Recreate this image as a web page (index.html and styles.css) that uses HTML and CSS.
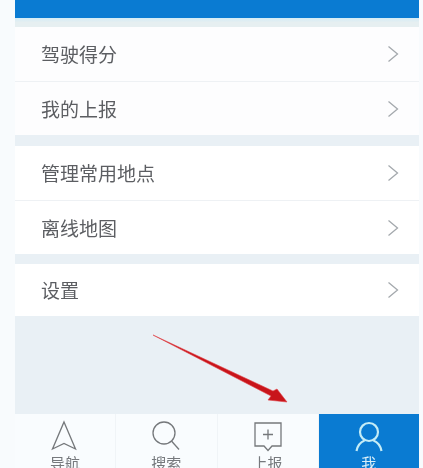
FILE: index.html
```html
<!DOCTYPE html>
<html lang="zh">
<head>
<meta charset="utf-8">
<title>我</title>
<link rel="stylesheet" href="styles.css">
</head>
<body>
<div class="page">
  <div class="topbar"></div>
  <div class="band"></div>
  <section class="group">
    <div class="row"><span>驾驶得分</span><svg class="chev" viewBox="0 0 12 18"><path d="M1.500 1.500 10.500 9 1.500 16.500"/></svg></div>
    <div class="row"><span>我的上报</span><svg class="chev" viewBox="0 0 12 18"><path d="M1.500 1.500 10.500 9 1.500 16.500"/></svg></div>
  </section>
  <section class="group tight">
    <div class="row"><span>管理常用地点</span><svg class="chev" viewBox="0 0 12 18"><path d="M1.500 1.500 10.500 9 1.500 16.500"/></svg></div>
    <div class="row"><span>离线地图</span><svg class="chev" viewBox="0 0 12 18"><path d="M1.500 1.500 10.500 9 1.500 16.500"/></svg></div>
  </section>
  <section class="group last">
    <div class="row"><span>设置</span><svg class="chev" viewBox="0 0 12 18"><path d="M1.500 1.500 10.500 9 1.500 16.500"/></svg></div>
  </section>
  <div class="filler"></div>
  <nav class="tabs">
    <div class="tab">
      <svg class="ico" viewBox="0 0 30 32"><path d="M14 2 25.500 29 14 23.500 2.500 29Z"/></svg>
      <span>导航</span>
    </div>
    <div class="tab">
      <svg class="ico" viewBox="0 0 30 32"><circle cx="13" cy="13" r="11"/><path d="M20.500 21 28 29.500"/></svg>
      <span>搜索</span>
    </div>
    <div class="tab">
      <svg class="ico" viewBox="0 0 30 32"><path d="M2 3H28V26H19L15 30.500 11 26H2Z"/><path d="M15 9.500V19.500M10 14.500H20"/></svg>
      <span>上报</span>
    </div>
    <div class="tab active">
      <svg class="ico" viewBox="0 0 30 32"><circle cx="15" cy="12" r="9"/><path d="M2.500 31C3.500 25 7 22 10.500 20.500M27.500 31C26.500 25 23 22 19.500 20.500"/></svg>
      <span>我</span>
    </div>
  </nav>
</div>
<svg class="arrow" viewBox="0 0 423 468"><path class="arrow-shape" d="M153 335 273 391 277 389 287 402 268 400 271 396Z"/></svg>
</body>
</html>
```
FILE: styles.css
```css
html, body {
  margin: 0;
  padding: 0;
  background: #f8fbfd;
}
.page {
  width: 404px;
  height: 468px;
  margin-left: 15px;
  display: flex;
  flex-direction: column;
  overflow: hidden;
  font-family: "Noto Sans CJK SC", "Liberation Sans", sans-serif;
  background: #e9f0f5;
}
.topbar {
  height: 18px;
  flex: none;
  background: #0a7bd2;
}
.band {
  height: 9px;
  flex: none;
  background: linear-gradient(#d4ecf6, #e6eff1 50%);
}
.group {
  flex: none;
  background: #fff;
  margin-bottom: 11px;
}
.group:nth-of-type(1) {
  background: #fdfdfe;
}
.group.tight {
  margin-bottom: 10px;
}
.group.last {
  margin-bottom: 0;
}
.row {
  height: 54px;
  box-sizing: border-box;
  padding: 0 20px 0 26px;
  display: flex;
  align-items: center;
  justify-content: space-between;
  font-size: 19px;
  line-height: 24px;
  color: #5c5e62;
}
.group.last .row {
  height: 52px;
}
.row + .row {
  border-top: 1px solid #eef1f4;
}
.row span {
  filter: blur(.4px);
}
.chev {
  width: 12px;
  height: 18px;
  fill: none;
  stroke: #a4a9ad;
  stroke-width: 1.300;
}
.filler {
  flex: 1;
}
.tabs {
  height: 54px;
  flex: none;
  display: grid;
  grid-template-columns: repeat(4, 1fr);
  gap: 1px;
  background: #f0f4f7;
}
.tab {
  min-width: 0;
  display: flex;
  flex-direction: column;
  align-items: center;
  padding-top: 6px;
  background: #f9fcfe;
  font-size: 15px;
  line-height: 20px;
  color: #76797d;
}
.tab span {
  filter: blur(.4px);
  margin-top: 1px;
}
.ico {
  width: 30px;
  height: 32px;
  flex: none;
  fill: none;
  stroke: #75787b;
  stroke-width: 1.300;
}
.tab.active {
  background: #0a7bd2;
  color: #d8eef8;
}
.tab.active .ico {
  stroke: #c4ecf6;
  stroke-width: 2.200;
}
.arrow {
  position: absolute;
  left: 0;
  top: 0;
  width: 423px;
  height: 468px;
  pointer-events: none;
}
.arrow-shape {
  fill: #c8141a;
  stroke: #e0454a;
  stroke-width: .6;
  filter: blur(.4px);
}
```
